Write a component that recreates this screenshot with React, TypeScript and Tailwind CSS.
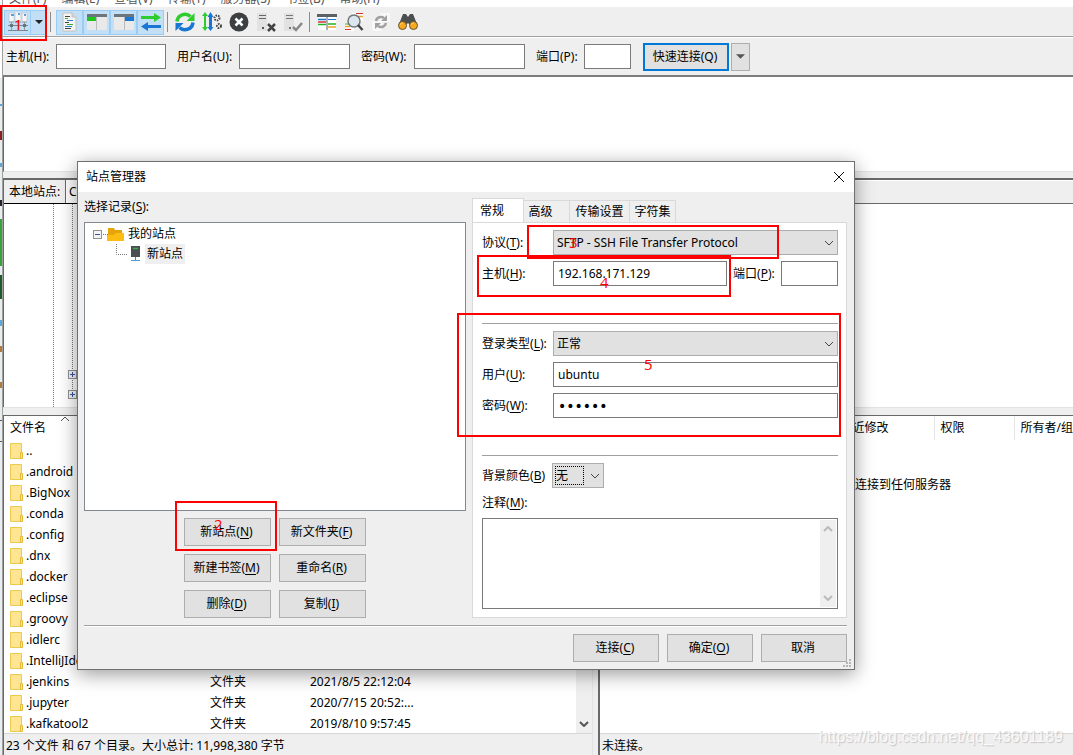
import React from "react";

const files = [
  { name: ".." },
  { name: ".android" },
  { name: ".BigNox" },
  { name: ".conda" },
  { name: ".config" },
  { name: ".dnx" },
  { name: ".docker" },
  { name: ".eclipse" },
  { name: ".groovy" },
  { name: ".idlerc" },
  { name: ".IntelliJIdea" },
  { name: ".jenkins", type: "文件夹", date: "2021/8/5 22:12:04" },
  { name: ".jupyter", type: "文件夹", date: "2020/7/15 20:52:..." },
  { name: ".kafkatool2", type: "文件夹", date: "2019/8/10 9:57:45" },
];

const menus = ["文件(F)", "编辑(E)", "查看(V)", "传输(T)", "服务器(S)", "书签(B)", "帮助(H)"];

// "text" followed by its underlined access key
function Key({ text, k, colon }: { text: string; k: string; colon?: boolean }) {
  return (
    <span className="whitespace-nowrap">
      {text}(<span className="underline underline-offset-2">{k}</span>){colon ? ":" : ""}
    </span>
  );
}

function Button({ children, className = "w-[87px]" }: { children: React.ReactNode; className?: string }) {
  return (
    <button className={`h-7 border border-[#adadad] bg-[#e1e1e1] pr-0.5 text-center ${className}`}>
      {children}
    </button>
  );
}

function Chevron({ className, up }: { className?: string; up?: boolean }) {
  return (
    <svg viewBox="0 0 10 6" className={className} fill="none" stroke="currentColor">
      <path d={up ? "M1 5 5 1 9 5" : "M1 1 5 5 9 1"} />
    </svg>
  );
}

function Select({ id, value, className = "flex-1" }: { id: string; value: string; className?: string }) {
  return (
    <div className={`relative ${className}`}>
      <select
        id={id}
        className="block h-[25px] w-full appearance-none border border-[#adadad] bg-[#e1e1e1] pr-6 pl-[3px] outline-none"
      >
        <option>{value}</option>
      </select>
      <Chevron className="pointer-events-none absolute top-[10px] right-1 h-[6px] w-[10px] text-[#444]" />
    </div>
  );
}

const field = "h-[25px] min-w-0 border border-[#7a7a7a] bg-white px-1 outline-none";

function ToolButton({ label, active, children }: { label: string; active?: boolean; children: React.ReactNode }) {
  return (
    <button
      aria-label={label}
      className={`flex h-[25px] w-[27px] items-center justify-center border ${
        active ? "border-[#99cdf5] bg-[#c2dff5]" : "border-transparent"
      }`}
    >
      <svg viewBox="0 0 20 20" className="h-5 w-5" fill="none">
        {children}
      </svg>
    </button>
  );
}

function ToolSeparator() {
  return <div className="mx-[3px] h-5 w-px bg-[#8c8c8c]" />;
}

function Toolbar() {
  return (
    <div className="flex h-[31px] items-center border-b border-white bg-[#efefef] pl-px shadow-[inset_0_-1px_0_#a0a0a0]">
      <button aria-label="站点管理器" className="flex h-[25px] w-[27px] items-center justify-center border border-[#99cdf5] bg-[#c2dff5]">
        <svg viewBox="0 0 20 20" className="h-5 w-5" fill="none">
          <path d="M1 1h5v9H1zM7 0h6v9H7zM14 1h5v9h-5z" fill="#f4f6f8" stroke="#b8c4cf" strokeWidth=".6" />
          <path d="M3 2h3v2H3zM10 1h2v2h-2zM16 2h2v2h-2z" fill="#5d9fd8" />
          <path d="M1 10h5M7 10h6M14 10h5M3.500 10v8M10 9v9M16.500 10v8" stroke="#8f9ba5" />
          <path d="M0 13.500h20M0 18.500h20" stroke="#7c868e" />
          <path d="M2 12h3v3H2zM15 12h3v3h-3z" fill="#68747d" />
        </svg>
      </button>
      <button aria-label="站点列表" className="-ml-px flex h-[25px] w-[17px] items-center justify-center border border-[#99cdf5] bg-[#c2dff5]">
        <svg viewBox="0 0 8 4" className="h-1 w-2">
          <path d="M0 0h8L4 4z" fill="#222" />
        </svg>
      </button>
      <div className="mr-[5px] ml-[3px] h-5 w-px bg-[#8c8c8c]" />
      <ToolButton label="消息日志" active>
        <path d="M3 1h9l4 4v14H3z" fill="#f4f4f4" stroke="#c2c2c2" />
        <path d="M12 1v4h4" fill="#d5d5d5" stroke="#c2c2c2" />
        <path d="M5 4.500h5M5 10.500h4M5 16.500h6" stroke="#444" />
        <path d="M5 6.500h3M7 12.500h6" stroke="#3dae2b" />
        <path d="M7 8.500h6M5 14.500h7" stroke="#2b7bd0" />
      </ToolButton>
      <ToolButton label="本地目录树" active>
        <path d="M0 2h20v16H0z" fill="#e9e9e9" />
        <path d="M0 2h20v3H0z" fill="#6b757d" />
        <path d="M0 5h9v4H0z" fill="#1ec71e" />
        <path d="M9.500 5v13" stroke="#bbb" />
      </ToolButton>
      <ToolButton label="远程目录树" active>
        <path d="M0 2h20v16H0z" fill="#e9e9e9" />
        <path d="M0 2h20v3H0z" fill="#6b757d" />
        <path d="M11 5h9v4h-9z" fill="#1976d2" />
        <path d="M10.500 5v13" stroke="#bbb" />
      </ToolButton>
      <ToolButton label="传输队列" active>
        <path d="M0 4h13V1l7 4.500-7 4.500V7H0z" fill="#2ecc2e" />
        <path d="M20 13H7v-3l-7 4.500 7 4.500v-3h13z" fill="#1976d2" />
      </ToolButton>
      <ToolSeparator />
      <ToolButton label="刷新">
        <path d="M2 9.500A8 8 0 0 1 15.500 4.500" stroke="#2ecc2e" strokeWidth="3.500" />
        <path d="M19.500 1v8h-8z" fill="#2ecc2e" />
        <path d="M18 10.500A8 8 0 0 1 4.500 15.500" stroke="#1976d2" strokeWidth="3.500" />
        <path d="M.5 19v-8h8z" fill="#1976d2" />
      </ToolButton>
      <ToolButton label="处理队列">
        <path d="M3 4v12" stroke="#2ecc2e" strokeWidth="2" />
        <path d="M0 4h6L3 0zM0 15h6l-3 4z" fill="#2ecc2e" />
        <path d="M8.500 4v12" stroke="#1976d2" strokeWidth="3" />
        <path d="M5.500 5h6l-3-5zM5.500 15h6l-3 4z" fill="#1976d2" />
        <circle cx="15" cy="6" r="2.500" stroke="#444" strokeWidth="2" strokeDasharray="1.500 1" />
        <circle cx="17" cy="14" r="2" stroke="#444" strokeWidth="2" strokeDasharray="1.500 1" />
      </ToolButton>
      <ToolButton label="取消">
        <circle cx="10" cy="10" r="9.500" fill="#3c4043" />
        <path d="m6.500 6.500 7 7m0-7-7 7" stroke="#fff" strokeWidth="2.500" />
      </ToolButton>
      <ToolButton label="断开">
        <path d="M1 1h10v18H1z" fill="#e2e2e2" />
        <path d="M3 3.500h7M3 6.500h7" stroke="#666" />
        <path d="M6 15h2v2H6z" fill="#555" />
        <path d="m12 12 7 7m0-7-7 7" stroke="#444" strokeWidth="2.500" />
      </ToolButton>
      <ToolButton label="重新连接">
        <path d="M1 1h10v18H1z" fill="#e2e2e2" />
        <path d="M3 3.500h7M3 6.500h7" stroke="#777" />
        <path d="M6 15h2v2H6z" fill="#777" />
        <path d="m10 15 3 3 6-7" stroke="#888" strokeWidth="2.500" />
      </ToolButton>
      <ToolSeparator />
      <ToolButton label="过滤器">
        <path d="M1 3h18v15H1z" fill="#fff" />
        <path d="M0 2h20v3H0z" fill="#5a6268" />
        <path d="M10 5v13" stroke="#5a6268" />
        <path d="M1 7.500h8" stroke="#1976d2" strokeWidth="1.500" />
        <path d="M1 10h8" stroke="#d32f2f" strokeWidth="1.500" />
        <path d="M11 7.500h8" stroke="#1976d2" />
        <path d="M1 12.500h8M11 12h8" stroke="#22b422" strokeWidth="1.500" />
        <path d="M11 15h8" stroke="#f0a020" strokeWidth="1.500" />
      </ToolButton>
      <ToolButton label="查找">
        <path d="M8 1h11v8H8zM1 11h9v8H1z" fill="#fff" />
        <path d="M12 1.500h7" stroke="#d32f2f" />
        <path d="M12 4.500h7M1 14.500h5" stroke="#f0a020" strokeWidth="1.500" />
        <path d="M1 17.500h6" stroke="#d32f2f" />
        <path d="M1 12h4" stroke="#22b422" />
        <circle cx="10" cy="9" r="6" fill="#dce6ee" stroke="#70777c" strokeWidth="1.500" />
        <path d="m14 13 4.500 5" stroke="#444" strokeWidth="2.500" />
      </ToolButton>
      <ToolButton label="同步浏览">
        <path d="M9 1h10v9H9zM1 9h10v10H1z" fill="#f8f8f8" />
        <path d="M5 9a5 5 0 0 1 8-3M15 11a5 5 0 0 1-8 3" stroke="#a0a0a0" strokeWidth="2.500" />
        <path d="M16 3v6h-6zM4 17v-6h6z" fill="#a0a0a0" />
      </ToolButton>
      <ToolButton label="目录比较">
        <path d="M5 2h3l2 3 2-3h3l4 10-5 3-4-4-4 4-5-3z" fill="#4b4f52" />
        <circle cx="4.500" cy="13.500" r="4" fill="#f6a821" stroke="#66512a" />
        <circle cx="15.500" cy="13.500" r="4" fill="#f6a821" stroke="#66512a" />
        <path d="M2.500 12.500a2 2 0 0 1 2-1.500M13.500 12.500a2 2 0 0 1 2-1.500" stroke="#ffe08a" />
      </ToolButton>
    </div>
  );
}

function QuickConnect() {
  return (
    <div className="flex h-[39px] items-center border-b-2 border-[#7c7c7c] bg-[#efefef] pl-[3px]">
      <label htmlFor="q-host" className="w-[50px]">主机(H):</label>
      <input id="q-host" className={`w-[110px] ${field}`} />
      <label htmlFor="q-user" className="ml-[11px] w-[62px]">用户名(U):</label>
      <input id="q-user" className={`w-[111px] ${field}`} />
      <label htmlFor="q-pass" className="ml-[11px] w-[53px]">密码(W):</label>
      <input id="q-pass" className={`w-[111px] ${field}`} />
      <label htmlFor="q-port" className="ml-[11px] w-12">端口(P):</label>
      <input id="q-port" className={`w-[47px] ${field}`} />
      <button className="ml-3 h-7 w-[86px] border-2 border-[#0078d7] bg-[#e1e1e1] pr-0.5">快速连接(Q)</button>
      <button aria-label="历史记录" className="ml-0.5 flex h-7 w-[19px] items-center justify-center border border-[#adadad] bg-[#e1e1e1]">
        <svg viewBox="0 0 8 4" className="h-[5px] w-[9px]">
          <path d="M0 0h8L4 4z" fill="#555" />
        </svg>
      </button>
    </div>
  );
}

function LocalTree() {
  return (
    <div className="flex min-w-0 flex-1 bg-white">
      <svg className="h-full w-20" fill="none">
        <path d="M49.500 0V204M68.500 0V190" stroke="#777" strokeDasharray="1 1" />
        {[170, 190].map((y) => (
          <g key={y}>
            <rect x="64.500" y={y - 4 + 0.5} width="8" height="8" fill="#f4f4f4" stroke="#919191" />
            <path d={`M66 ${y + 0.5}h5M68.500 ${y - 2}v5`} stroke="#3a55a0" />
          </g>
        ))}
      </svg>
    </div>
  );
}

function LocalFiles() {
  return (
    <div className="flex min-h-0 flex-1">
      <div className="min-w-0 flex-1 bg-white">
        <table className="w-full table-fixed border-collapse text-left">
          <thead>
            <tr className="h-6">
              <th className="relative w-[200px] pl-1.5 font-normal">
                文件名
                <Chevron up className="absolute top-0 left-14 h-[6px] w-[10px] text-[#555]" />
              </th>
              <th className="w-[100px]"></th>
              <th></th>
            </tr>
          </thead>
          <tbody>
            {files.map((f) => (
              <tr key={f.name} className="h-[21px]">
                <td className="p-0 pl-1.5">
                  <div className="flex items-center gap-[3px]">
                    <svg viewBox="0 0 13 16" className="h-4 w-[13px]">
                      <path d="M.5.5h11v15H.5z" fill="#ffe492" stroke="#ecc94f" />
                      <path d="M10.500 9.500h2v6h-2z" fill="#ffe492" stroke="#e3b93a" />
                    </svg>
                    {f.name}
                  </div>
                </td>
                <td className="p-0 pl-1.5">{f.type}</td>
                <td className="p-0 pl-1.5">{f.date}</td>
              </tr>
            ))}
          </tbody>
        </table>
      </div>
      <div className="flex w-4 items-end justify-center bg-[#efefef] pb-1.5">
        <Chevron className="h-[6px] w-[10px] stroke-2 text-[#555]" />
      </div>
    </div>
  );
}

function RemoteFiles() {
  return (
    <div className="min-h-0 min-w-0 flex-1 overflow-hidden bg-white">
      <table className="w-full table-fixed border-collapse text-left">
        <thead>
          <tr className="h-6">
            <th className="w-[234px] border-r border-[#e5e5e5]"></th>
            <th className="w-[100px] border-r border-[#e5e5e5] pl-1.5 font-normal">最近修改</th>
            <th className="w-20 border-r border-[#e5e5e5] pl-1.5 font-normal">权限</th>
            <th className="pl-1.5 font-normal whitespace-nowrap">所有者/组</th>
          </tr>
        </thead>
      </table>
      <p className="mt-[37px] pl-[243px]">未连接到任何服务器</p>
    </div>
  );
}

function MainWindow() {
  return (
    <div className="flex h-full">
      {/* sliver of the windows behind */}
      <svg className="h-full w-0.5 bg-[#e8eef0]">
        <path d="M0 0h2v78H0z" fill="#fff" />
        <path d="M0 104h2v2H0zM0 163h2v4H0zM0 320h2v6H0z" fill="#5aa8dc" />
        <path d="M0 131h2v9H0z" fill="#8a1f1f" />
        <path d="M0 200h2v6H0z" fill="#223" />
        <path d="M0 219h2v47H0z" fill="#35a23a" />
        <path d="M0 275h2v24H0z" fill="#1f5a2a" />
        <path d="M0 346h2v6H0zM0 382h2v6H0z" fill="#b07a3a" />
        <path d="M0 420h2v1H0zM0 441h2v1H0z" fill="#555" />
      </svg>
      <div className="flex min-w-0 flex-1 flex-col border-l border-[#a0a0a0]">
        <nav className="flex h-[7px] shrink-0 items-end gap-[15px] overflow-hidden bg-white pl-[6px] leading-4 text-[#555]">
          {menus.map((m) => (
            <span key={m}>{m}</span>
          ))}
        </nav>
        <Toolbar />
        <QuickConnect />
        <div className="h-[95px] shrink-0 border-b border-l border-b-[#e3e3e3] border-l-[#696969] bg-white" />
        <div className="h-[6px] shrink-0 bg-[#efefef]" />
        <div className="flex h-[229px] shrink-0">
          <section className="flex w-[590px] shrink-0 flex-col border-t-2 border-l border-[#696969]">
            <div className="flex h-6 shrink-0 border-b border-black bg-[#efefef]">
              <label htmlFor="local-path" className="flex w-[62px] items-center border-r border-[#696969] pl-[5px]">
                本地站点:
              </label>
              <input id="local-path" defaultValue="C:\" className="min-w-0 flex-1 bg-white px-[3px] outline-none" />
            </div>
            <LocalTree />
          </section>
          <div className="w-1 bg-[#efefef]" />
          <section className="flex min-w-0 flex-1 flex-col border-t-2 border-l-2 border-[#696969]">
            <div className="h-6 shrink-0 border-t border-b border-t-white border-b-[#696969] bg-[#efefef]" />
            <div className="flex-1 bg-white" />
          </section>
        </div>
        <div className="h-[8px] shrink-0 border-t border-[#e3e3e3] bg-[#efefef]" />
        <div className="flex min-h-0 flex-1">
          <section className="flex w-[590px] shrink-0 flex-col border-t border-r border-l border-t-[#696969] border-r-[#e3e3e3] border-l-[#696969]">
            <LocalFiles />
            <footer className="flex h-[22px] shrink-0 items-end border-t border-[#d7d7d7] bg-[#efefef] pl-0.5 leading-[18px] whitespace-nowrap">
              23 个文件 和 67 个目录。大小总计: 11,998,380 字节
            </footer>
          </section>
          <div className="w-[5px] bg-[#efefef]" />
          <section className="flex min-w-0 flex-1 flex-col border-t border-l-2 border-[#696969]">
            <RemoteFiles />
            <footer className="flex h-[22px] shrink-0 items-end border-t border-[#d7d7d7] bg-[#efefef] pl-0.5 leading-[18px]">
              未连接。
            </footer>
          </section>
        </div>
      </div>
    </div>
  );
}

function SiteTree() {
  return (
    <ul className="min-h-0 flex-1 border border-[#828790] bg-white pt-px">
      <li className="flex h-5 items-center pl-2">
        <svg viewBox="0 0 32 20" className="h-5 w-8" fill="none">
          <rect x=".5" y="6.500" width="8" height="8" fill="#f4f4f4" stroke="#919191" />
          <path d="M2 10.500h5" stroke="#3a55a0" />
          <path d="M10 10.500h5" stroke="#777" strokeDasharray="1 1" />
          <path d="M15 4h6l1 2h7v10H15z" fill="#e5a50a" />
          <path d="M14 17V11h7l2-2h8v8z" fill="#fdbc11" />
        </svg>
        <span className="ml-[3px]">我的站点</span>
      </li>
      <li className="flex h-5 items-center pl-[31px]">
        <svg viewBox="0 0 26 20" className="h-5 w-[26px]" fill="none">
          <path d="M.5 0v10.500H12" stroke="#777" strokeDasharray="1 1" />
          <path d="M15 2h9v11h-9z" fill="#4b4f52" />
          <path d="M17 4.500h5" stroke="#37b34a" strokeWidth="1.500" />
          <path d="M19.500 13v4" stroke="#777" />
          <path d="M15 16.500h9" stroke="#5a9bd0" />
        </svg>
        <span className="ml-[3px] bg-[#efefef] px-0.5 leading-5">新站点</span>
      </li>
    </ul>
  );
}

function GeneralTab() {
  return (
    <div className="flex flex-1 flex-col border border-[#d9d9d9] bg-white pt-[7px] pr-2 pb-2 pl-[9px]">
      <div className="flex items-center">
        <label htmlFor="protocol" className="w-[71px]"><Key text="协议" k="T" colon /></label>
        <Select id="protocol" value="SFTP - SSH File Transfer Protocol" />
      </div>
      <div className="mt-1.5 flex items-center">
        <label htmlFor="host" className="w-[71px]"><Key text="主机" k="H" colon /></label>
        <input id="host" defaultValue="192.168.171.129" className={`flex-1 ${field}`} />
        <label htmlFor="port" className="ml-1.5 w-12"><Key text="端口" k="P" colon /></label>
        <input id="port" className={`w-[57px] ${field}`} />
      </div>
      <hr className="mt-[37px] mb-[7px] border-[#a0a0a0]" />
      <div className="flex items-center">
        <label htmlFor="logon" className="w-[71px]"><Key text="登录类型" k="L" colon /></label>
        <Select id="logon" value="正常" />
      </div>
      <div className="mt-1.5 flex items-center">
        <label htmlFor="user" className="w-[71px]"><Key text="用户" k="U" colon /></label>
        <input id="user" defaultValue="ubuntu" className={`flex-1 ${field}`} />
      </div>
      <div className="mt-1.5 flex items-center">
        <label htmlFor="pass" className="w-[71px]"><Key text="密码" k="W" colon /></label>
        <input
          id="pass"
          type="password"
          defaultValue="ubuntu"
          className={`flex-1 font-['DejaVu_Sans',sans-serif] text-sm ${field}`}
        />
      </div>
      <hr className="mt-[37px] mb-[7px] border-[#a0a0a0]" />
      <div className="flex items-center">
        <label htmlFor="color" className="w-[70px]"><Key text="背景颜色" k="B" /></label>
        <div className="relative">
          <Select id="color" value="无" className="w-[52px]" />
          <div className="pointer-events-none absolute top-[3px] left-[3px] h-[19px] w-[29px] border border-dotted border-black" />
        </div>
      </div>
      <label htmlFor="notes" className="h-[30px] leading-[30px]"><Key text="注释" k="M" colon /></label>
      <div className="flex min-h-0 flex-1 border border-[#7a7a7a] p-px">
        <textarea id="notes" className="min-w-0 flex-1 resize-none outline-none" />
        <div className="flex w-4 flex-col items-center justify-between bg-[#efefef] py-1.5 text-[#bbb]">
          <Chevron up className="h-[6px] w-[10px] stroke-2" />
          <Chevron className="h-[6px] w-[10px] stroke-2" />
        </div>
      </div>
    </div>
  );
}

function SiteManager() {
  const tab = "h-[22px] border border-b-0 border-l-0 border-[#d9d9d9] text-center";
  return (
    <div
      role="dialog"
      aria-label="站点管理器"
      className="absolute top-[161px] left-[77px] flex h-[509px] w-[778px] flex-col border border-[#707070] bg-[#efefef] shadow-[0_4px_18px_rgba(0,0,0,0.4)]"
    >
      <div className="flex h-[30px] items-center justify-between bg-white pr-[9px] pl-2">
        <h1>站点管理器</h1>
        <button aria-label="关闭">
          <svg viewBox="0 0 12 12" className="h-3 w-3" stroke="#111">
            <path d="m1 1 10 10M11 1 1 11" />
          </svg>
        </button>
      </div>
      <div className="flex min-h-0 flex-1 gap-1.5 pr-[7px] pl-1.5">
        <div className="flex w-[382px] flex-col">
          <div className="h-[30px] leading-[30px]"><Key text="选择记录" k="S" colon /></div>
          <SiteTree />
          <div className="mt-[7px] grid grid-cols-[auto_auto] justify-center gap-2">
            <Button><Key text="新站点" k="N" /></Button>
            <Button><Key text="新文件夹" k="F" /></Button>
            <Button><Key text="新建书签" k="M" /></Button>
            <Button><Key text="重命名" k="R" /></Button>
            <Button><Key text="删除" k="D" /></Button>
            <Button><Key text="复制" k="I" /></Button>
          </div>
        </div>
        <div className="flex min-w-0 flex-1 flex-col pt-1.5">
          <div role="tablist" className="flex items-end">
            <button role="tab" aria-selected="true" className="-mb-px h-[25px] w-[52px] border border-b-0 border-[#d9d9d9] bg-white pr-3">
              常规
            </button>
            <button role="tab" className={`w-[46px] pr-3 ${tab}`}>高级</button>
            <button role="tab" className={`w-[60px] ${tab}`}>传输设置</button>
            <button role="tab" className={`w-[46px] ${tab}`}>字符集</button>
          </div>
          <GeneralTab />
        </div>
      </div>
      <div className="mt-[7px] mr-[7px] ml-1.5 flex justify-end gap-2 border-t border-[#a0a0a0] pt-2 pb-[7px] shadow-[inset_0_1px_0_#fff]">
        <Button className="w-[86px]"><Key text="连接" k="C" /></Button>
        <Button className="w-[86px]"><Key text="确定" k="O" /></Button>
        <Button className="w-[86px]">取消</Button>
      </div>
      <svg viewBox="0 0 8 8" className="absolute right-[3px] bottom-0.5 h-2 w-2" fill="#b5b5b5">
        <path d="M6 0h2v2H6zM3 3h2v2H3zM6 3h2v2H6zM0 6h2v2H0zM3 6h2v2H3zM6 6h2v2H6z" />
      </svg>
    </div>
  );
}

// red step marks drawn over the windows
function Marks() {
  const box = "absolute border-2 border-[#f00]";
  const digit = "absolute font-['Open_Sans',sans-serif] text-[15px] leading-4 text-[#f00]";
  return (
    <div className="pointer-events-none absolute inset-0">
      <div className={`${box} top-[5px] left-0 h-9 w-[47px]`} />
      <span className={`${digit} top-4 left-[14px]`}>1</span>
      <div className={`${box} top-[501px] left-[175px] h-[50px] w-[102px]`} />
      <span className={`${digit} top-[516px] left-[214px]`}>2</span>
      <div className={`${box} top-[225px] left-[527px] h-[34px] w-[252px]`} />
      <span className={`${digit} top-[234px] left-[569px]`}>3</span>
      <div className={`${box} top-[255px] left-[477px] h-[42px] w-[254px]`} />
      <span className={`${digit} top-[274px] left-[600px]`}>4</span>
      <div className={`${box} top-[313px] left-[457px] h-[124px] w-[384px]`} />
      <span className={`${digit} top-[356px] left-[644px]`}>5</span>
    </div>
  );
}

export default function App() {
  return (
    <div className="relative h-screen overflow-hidden bg-[#efefef] font-['Noto_Sans','Noto_Sans_CJK_SC',sans-serif] text-xs text-black">
      <MainWindow />
      <SiteManager />
      <Marks />
      <div className="pointer-events-none absolute right-2.5 bottom-2 font-['Liberation_Sans',sans-serif] text-base leading-5 text-white/80 [text-shadow:1px_1px_1px_#c4c4c4]">
        https://blog.csdn.net/qq_43601189
      </div>
    </div>
  );
}
